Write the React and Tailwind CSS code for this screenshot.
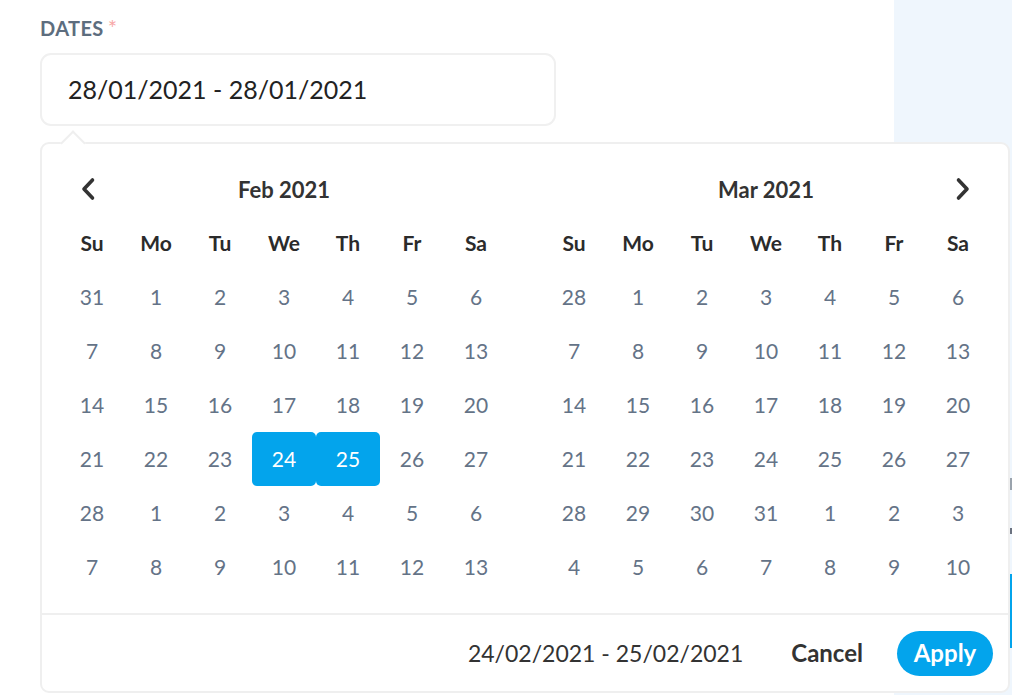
import React from 'react';

const WEEKDAYS = ['Su', 'Mo', 'Tu', 'We', 'Th', 'Fr', 'Sa'];

const FEB = [
    [31, 1, 2, 3, 4, 5, 6],
    [7, 8, 9, 10, 11, 12, 13],
    [14, 15, 16, 17, 18, 19, 20],
    [21, 22, 23, 24, 25, 26, 27],
    [28, 1, 2, 3, 4, 5, 6],
    [7, 8, 9, 10, 11, 12, 13],
];

const MAR = [
    [28, 1, 2, 3, 4, 5, 6],
    [7, 8, 9, 10, 11, 12, 13],
    [14, 15, 16, 17, 18, 19, 20],
    [21, 22, 23, 24, 25, 26, 27],
    [28, 29, 30, 31, 1, 2, 3],
    [4, 5, 6, 7, 8, 9, 10],
];

const Chevron = ({ dir }) => (
    <svg width="16" height="24" viewBox="0 0 16 24" fill="none">
        <path
            d={dir === 'left' ? 'M12.5 3 L4 12 L12.5 21' : 'M3.5 3 L12 12 L3.5 21'}
            stroke="#333"
            strokeWidth="3.6"
            strokeLinecap="round"
            strokeLinejoin="round"
        />
    </svg>
);

const Month = ({ title, weeks, nav, selectedRow }) => (
    <div className="w-[448px]">
        {/* Month heading */}
        <div className="relative flex items-center justify-center h-[54px]">
            {nav === 'left' && (
                <button className="absolute left-[20px] top-[15px]">
                    <Chevron dir="left" />
                </button>
            )}
            <span className="text-[22px] font-bold text-[#333]">{title}</span>
            {nav === 'right' && (
                <button className="absolute right-[19px] top-[15px]">
                    <Chevron dir="right" />
                </button>
            )}
        </div>

        {/* Weekdays */}
        <div className="grid grid-cols-7">
            {WEEKDAYS.map((d) => (
                <div key={d} className="flex items-center justify-center h-[54px] text-[21px] font-bold text-[#2b2b2b]">
                    {d}
                </div>
            ))}
        </div>

        {/* Days */}
        {weeks.map((week, r) => (
            <div key={r} className="grid grid-cols-7">
                {week.map((day, c) => {
                    const selected = selectedRow === r && (c === 3 || c === 4);
                    return (
                        <div
                            key={c}
                            className={`flex items-center justify-center h-[54px] text-[21px] ${selected
                                    ? 'bg-[#03a4ec] text-white rounded-[5px]'
                                    : 'text-[#647387]'
                                }`}
                        >
                            {day}
                        </div>
                    );
                })}
            </div>
        ))}
    </div>
);

const App = () => {
    return (
        <div
            className="relative w-[1012px] h-[695px] overflow-hidden bg-white"
            style={{ fontFamily: 'Lato, "Open Sans", sans-serif' }}
        >
            <div className="flex h-full">
                {/* Form column */}
                <div className="flex-1 pl-10 pt-[13px]">
                    <label className="flex items-start h-[28px] text-[20px] font-bold tracking-[0.4px] text-[#5d6d7e]">
                        DATES
                        <span className="ml-[4px] -mt-[2px] text-[22px] font-normal text-[#f7a8a8]">*</span>
                    </label>
                    <div className="mt-[12px] flex items-center w-[516px] h-[73px] px-[26px] border-2 border-[#f0f0f0] rounded-[11px] text-[25px] text-[#222]">
                        28/01/2021 - 28/01/2021
                    </div>
                </div>

                {/* Side panel */}
                <div className="w-[118px] bg-[#eff6fd] pt-[470px] pl-[116px]">
                    <div className="w-[3px] h-[12px] bg-[#9aa3ad] mt-[8px]"></div>
                    <div className="w-[3px] h-[6px] bg-[#6b7280] mt-[38px]"></div>
                    <div className="w-[3px] h-[74px] bg-[#03a4ec] mt-[40px]"></div>
                </div>
            </div>

            {/* Date range popup */}
            <div className="absolute left-[40px] top-[142px] w-[970px] h-[551px] bg-white border-2 border-[#efefef] rounded-[9px] flex flex-col">
                <div className="absolute -top-[10px] left-[22px] w-[18px] h-[18px] bg-white border-l-2 border-t-2 border-[#efefef] rotate-45"></div>

                <div className="flex gap-[34px] pl-[18px] pt-[18px] h-[469px]">
                    <Month title="Feb 2021" weeks={FEB} nav="left" selectedRow={3} />
                    <Month title="Mar 2021" weeks={MAR} nav="right" />
                </div>

                <div className="flex-1 flex items-center justify-end border-t-2 border-[#efefef] pr-[15px]">
                    <span className="text-[23px] text-[#333]">24/02/2021 - 25/02/2021</span>
                    <button className="ml-[48px] text-[24px] font-bold text-[#333]">Cancel</button>
                    <button className="ml-[34px] w-[96px] h-[45px] rounded-full bg-[#03a4ec] text-[24px] font-bold text-white">
                        Apply
                    </button>
                </div>
            </div>
        </div>
    );
};

export default App;
